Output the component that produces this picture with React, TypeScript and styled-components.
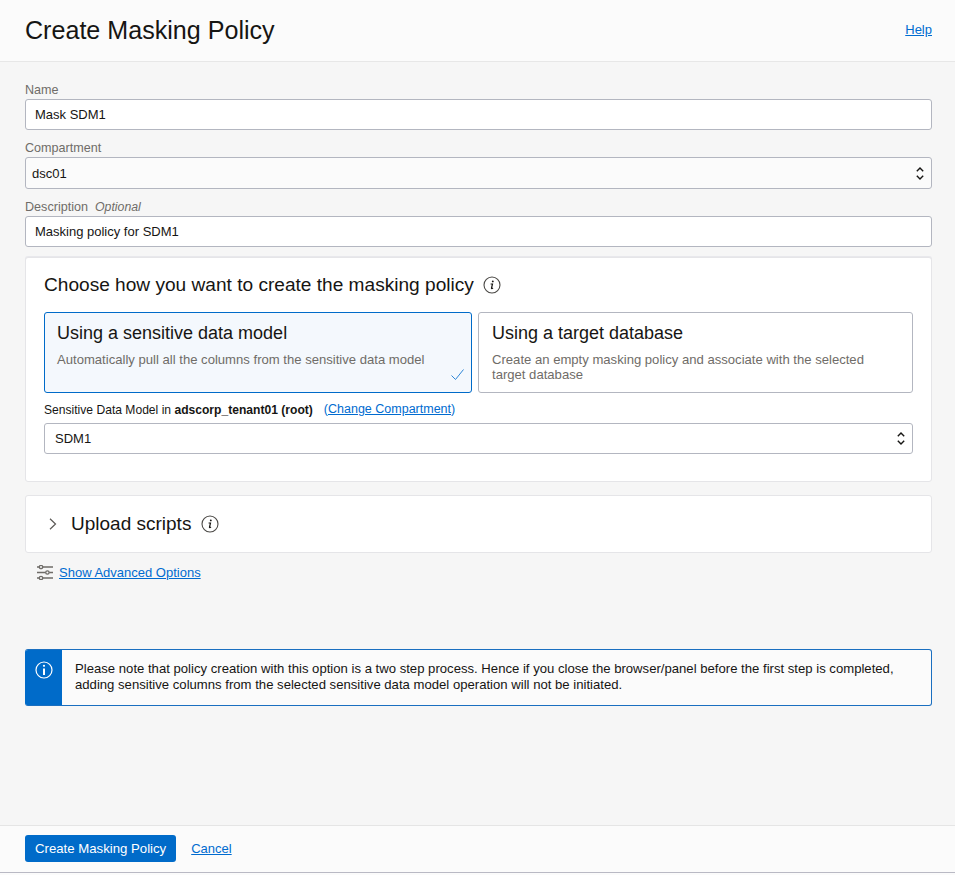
import React from "react";
import styled, { createGlobalStyle } from "styled-components";

const Global = createGlobalStyle`
  html, body { margin: 0; padding: 0; background: #fbfbfb; }
  body { font-family: "Liberation Sans", Arial, sans-serif; }
`;
const Page = styled.div`
  width: 955px; height: 875px; display: flex; flex-direction: column; overflow: hidden;
  color: #161513; font-size: 13px;
`;
const Header = styled.header`
  height: 59px; flex: none; background: #fbfbfb; border-bottom: 1px solid #e7e7e7;
  display: flex; align-items: center; justify-content: space-between; padding: 0 23px 2px 25px;
`;
const Title = styled.h1`
  margin: 0; font-size: 25.1px; font-weight: 400; line-height: 30px; color: #161513;
`;
const Link = styled.a<{ $size?: number }>`
  color: #006bd0; text-decoration: underline; font-size: ${(p) => p.$size ?? 13}px; cursor: pointer;
`;
const Body = styled.main`
  flex: 1; background: #f6f6f6; padding: 21px 23px 0 25px; display: flex; flex-direction: column;
`;
const Field = styled.div<{ $mb?: number }>`
  display: flex; flex-direction: column; margin-bottom: ${(p) => p.$mb ?? 11}px;
`;
const Label = styled.label`
  font-size: 12.6px; line-height: 14px; color: #6f6c68; margin-bottom: 2px;
`;
const Optional = styled.em`
  margin-left: 7px; font-size: 12.3px; color: #6f6c68;
`;
const Input = styled.div`
  height: 31px; box-sizing: border-box; background: #fff; border: 1px solid #b3b6c0; border-radius: 3px;
  padding: 0 9px; display: flex; align-items: center; font-size: 13px; color: #161513;
`;
const Select = styled.div<{ $light?: boolean; $pad?: number; $h?: number }>`
  height: ${(p) => p.$h ?? 32}px; box-sizing: border-box; background: ${(p) => (p.$light ? "#fff" : "#fbfbfb")};
  border: 1px solid #b3b6c0; border-radius: 3px; padding: 0 7px 0 ${(p) => p.$pad ?? 6}px;
  display: flex; align-items: center; justify-content: space-between; font-size: 13px; color: #161513;
`;
const Card = styled.section`
  background: #fff; border: 1px solid #e5e5e8; border-radius: 3px; box-sizing: border-box;
`;
const ChooseCard = styled(Card)`
  height: 225px; padding: 15px 18px 0; margin-bottom: 13px; box-shadow: 0 -1px 0 #e8e8ec;
`;
const CardTitle = styled.div`
  display: flex; align-items: center; gap: 9px; font-size: 19.1px; line-height: 24px; margin-bottom: 15px;
`;
const Tiles = styled.div`
  display: grid; grid-template-columns: 428px 435px; gap: 6px; margin-bottom: 9px;
`;
const Tile = styled.div<{ $on?: boolean }>`
  position: relative; height: 81px; box-sizing: border-box; border-radius: 3px;
  padding: 10px 30px 10px ${(p) => (p.$on ? 12 : 13)}px;
  border: 1px solid ${(p) => (p.$on ? "#006bc9" : "#b3b6c0")};
  background: ${(p) => (p.$on ? "#f4f8fd" : "#fff")};
`;
const TileTitle = styled.div`
  font-size: 18px; line-height: 21px; color: #161513; margin-bottom: 8px;
`;
const TileText = styled.div`
  font-size: 13.1px; line-height: 15px; color: #6f6c68;
`;
const Tick = styled.svg`
  position: absolute; right: 7px; bottom: 12px; width: 13px; height: 11px;
`;
const ModelLabel = styled.div`
  display: flex; align-items: baseline; font-size: 12.1px; line-height: 16px; color: #161513; margin-bottom: 5px;
`;
const Paren = styled.span`
  margin-left: 11px; position: relative; top: -1px; font-size: 12.5px; color: #006bd0;
`;
const UploadCard = styled(Card)`
  height: 58px; padding: 0 0 1px 23px; display: flex; align-items: center; font-size: 19px; margin-bottom: 9px;
`;
const UploadLabel = styled.span`
  margin-left: 14px; margin-right: 10px;
`;
const Advanced = styled.div`
  display: flex; align-items: center; gap: 6px; padding-left: 12px; height: 20px; margin-bottom: 67px;
`;
const Alert = styled.div`
  height: 57px; box-sizing: border-box; display: flex; background: #fbfbfb; border: 1px solid #1a6fc0;
  border-left: none; border-radius: 3px; overflow: hidden;
`;
const AlertBar = styled.div`
  width: 37px; flex: none; background: #006bc9; display: flex; justify-content: center; padding-top: 12px;
  margin: -1px 0;
`;
const AlertText = styled.p`
  margin: 0; padding: 11px 12px 0 13px; font-size: 13.14px; line-height: 16px; color: #161513;
`;
const Footer = styled.footer`
  height: 45px; padding: 0 25px 1px; flex: none; background: #fbfbfb; border-top: 1px solid #e5e5e5;
  border-bottom: 1px solid #b9b9c4; margin-bottom: 2px; display: flex; align-items: center; gap: 15px;
`;
const Primary = styled.button`
  height: 27px; padding: 0 10px; border: none; border-radius: 3px; background: #006bc9; color: #fff;
  font: 13.2px "Liberation Sans", Arial, sans-serif;
`;

const Updown = () => (
  <svg width="8" height="13" viewBox="0 0 8 13" fill="none" stroke="#161513" strokeWidth="1.4">
    <path d="M.8 4.2L4 1l3.2 3.2M.8 8.8L4 12l3.2-3.2" />
  </svg>
);
const Info = () => (
  <svg width="18" height="18" viewBox="0 0 18 18" fill="none">
    <circle cx="9" cy="9" r="8" stroke="#4a4845" strokeWidth="1.1" />
    <circle cx="9.8" cy="5.4" r="0.95" fill="#161513" />
    <path d="M7.6 8h1.9l-1 4.2c-.1.5.3.7 1.5-.2" stroke="#161513" strokeWidth="1.2" />
  </svg>
);

export default function App() {
  return (
    <Page>
      <Global />
      <Header>
        <Title>Create Masking Policy</Title>
        <Link>Help</Link>
      </Header>
      <Body>
        <Field>
          <Label>Name</Label>
          <Input>Mask SDM1</Input>
        </Field>
        <Field>
          <Label>Compartment</Label>
          <Select>dsc01<Updown /></Select>
        </Field>
        <Field $mb={10}>
          <Label>Description<Optional>Optional</Optional></Label>
          <Input>Masking policy for SDM1</Input>
        </Field>
        <ChooseCard>
          <CardTitle>Choose how you want to create the masking policy <Info /></CardTitle>
          <Tiles>
            <Tile $on>
              <TileTitle>Using a sensitive data model</TileTitle>
              <TileText>Automatically pull all the columns from the sensitive data model</TileText>
              <Tick viewBox="0 0 13 11" fill="none" stroke="#2f86d6" strokeWidth="1">
                <path d="M.5 6.5l4 4 8-10" />
              </Tick>
            </Tile>
            <Tile>
              <TileTitle>Using a target database</TileTitle>
              <TileText>Create an empty masking policy and associate with the selected target database</TileText>
            </Tile>
          </Tiles>
          <ModelLabel>
            <span>Sensitive Data Model in <b>adscorp_tenant01 (root)</b></span>
            <Paren>(<Link $size={12.5}>Change Compartment</Link>)</Paren>
          </ModelLabel>
          <Select $light $pad={10} $h={31}>SDM1<Updown /></Select>
        </ChooseCard>
        <UploadCard>
          <svg width="8" height="12" viewBox="0 0 8 12" fill="none" stroke="#5b5956" strokeWidth="1.2">
            <path d="M1 .8L6.5 6 1 11.2" />
          </svg>
          <UploadLabel>Upload scripts</UploadLabel>
          <Info />
        </UploadCard>
        <Advanced>
          <svg width="16" height="15" viewBox="0 0 16 15" fill="none" stroke="#6f6c68" strokeWidth="1.3">
            <path d="M0 2h2.2M5.8 2H16M0 7.5h8.5M12.2 7.5H16M0 13h2.2M5.8 13H16" />
            <circle cx="4" cy="2" r="1.7" /><circle cx="10.4" cy="7.5" r="1.7" /><circle cx="4" cy="13" r="1.7" />
          </svg>
          <Link>Show Advanced Options</Link>
        </Advanced>
        <Alert>
          <AlertBar>
            <svg width="18" height="18" viewBox="0 0 18 18" fill="none" stroke="#fff">
              <circle cx="9" cy="9" r="8" strokeWidth="1.2" />
              <path d="M9 7.6V14" strokeWidth="2" />
              <circle cx="9" cy="4.8" r="1.1" fill="#fff" stroke="none" />
            </svg>
          </AlertBar>
          <AlertText>
            Please note that policy creation with this option is a two step process. Hence if you close the browser/panel before the first step is completed, adding sensitive columns from the selected sensitive data model operation will not be initiated.
          </AlertText>
        </Alert>
      </Body>
      <Footer>
        <Primary>Create Masking Policy</Primary>
        <Link>Cancel</Link>
      </Footer>
    </Page>
  );
}
